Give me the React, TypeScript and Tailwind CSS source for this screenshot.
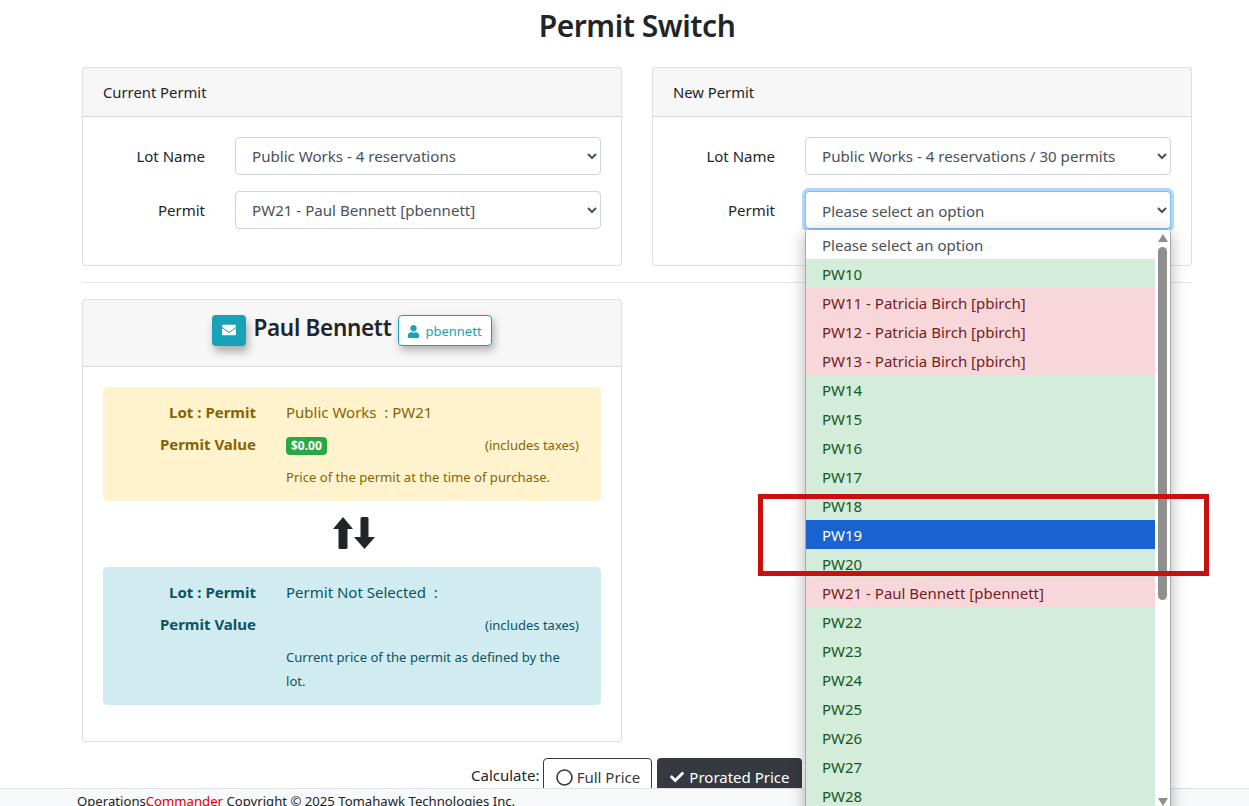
import React from "react";
import { FaEnvelope, FaUser, FaCheck, FaRegCircle } from "react-icons/fa";

const font = { fontFamily: '"Noto Sans", "Open Sans", sans-serif' };

function Row({ label, value, focus }: { label: string; value: string; focus?: boolean }) {
  return (
    <div className="flex items-center h-[38px] mb-4">
      <label className="w-[102px] text-right text-[15px] text-[#212529]">{label}</label>
      <select
        defaultValue={value}
        className={
          "ml-[30px] w-[366px] h-[38px] rounded-[4px] bg-white border px-3 text-[15.1px] text-[#495057] outline-none " +
          (focus ? "border-[#80bdff] pt-[1px] shadow-[0_0_0_3px_rgba(0,123,255,0.32)]" : "border-[#ced4da]")
        }
      >
        <option>{value}</option>
      </select>
    </div>
  );
}

function PermitCard({ title, lot, permit, focus }: { title: string; lot: string; permit: string; focus?: boolean }) {
  return (
    <section className="h-[199px] rounded-[4px] border border-[rgba(0,0,0,0.125)] bg-white">
      <div className="h-[49px] flex items-center px-5 bg-[rgba(0,0,0,0.03)] border-b border-[rgba(0,0,0,0.125)] text-[14.8px] text-[#212529]">
        {title}
      </div>
      <div className="pt-5 px-5">
        <Row label="Lot Name" value={lot} />
        <Row label="Permit" value={permit} focus={focus} />
      </div>
    </section>
  );
}

function Info({
  tone,
  value,
  badge,
  note,
  h,
}: {
  tone: string;
  value: string;
  badge?: boolean;
  note: string;
  h: string;
}) {
  return (
    <div className={"rounded-[4px] border pl-5 pr-[21px] pt-[8px] " + tone + " " + h}>
      <div className="grid grid-cols-[132px_1fr] gap-x-[30px] text-[15px]">
        <div className="h-[32px] flex items-center justify-end font-bold">Lot : Permit</div>
        <div className="h-[32px] flex items-center whitespace-pre">{value}</div>
        <div className="h-[32px] flex items-center justify-end font-bold">Permit Value</div>
        <div className="h-[32px] pt-[3px] flex items-center justify-between text-[13px]">
          {badge ? (
            <span className="bg-[#28a745] text-white font-bold text-[12px] rounded-[4px] px-[5px] h-[18px] leading-[18px]">$0.00</span>
          ) : (
            <span />
          )}
          <span>(includes taxes)</span>
        </div>
        <div />
        <div className="text-[13.1px] leading-[24px] pt-[5px]">{note}</div>
      </div>
    </div>
  );
}

const options: [string, "w" | "g" | "r" | "s"][] = [
  ["Please select an option", "w"],
  ["PW10", "g"],
  ["PW11 - Patricia Birch [pbirch]", "r"],
  ["PW12 - Patricia Birch [pbirch]", "r"],
  ["PW13 - Patricia Birch [pbirch]", "r"],
  ["PW14", "g"],
  ["PW15", "g"],
  ["PW16", "g"],
  ["PW17", "g"],
  ["PW18", "g"],
  ["PW19", "s"],
  ["PW20", "g"],
  ["PW21 - Paul Bennett [pbennett]", "r"],
  ["PW22", "g"],
  ["PW23", "g"],
  ["PW24", "g"],
  ["PW25", "g"],
  ["PW26", "g"],
  ["PW27", "g"],
  ["PW28", "g"],
];

const toneClass = {
  w: "bg-white text-[#495057]",
  g: "bg-[#d4edda] text-[#155724]",
  r: "bg-[#f8d7da] text-[#721c24]",
  s: "bg-[#1a62d0] text-white",
};

export default function App() {
  return (
    <div className="relative w-[1249px] h-[806px] overflow-hidden bg-white text-[#212529]" style={font}>
      <div className="w-[1110px] ml-[82px]">
        <h1 className="h-[67px] pt-[3px] text-center text-[30px] leading-[45px] font-semibold tracking-[-0.45px]">Permit Switch</h1>
        <div className="grid grid-cols-2 gap-x-[30px]">
          <PermitCard title="Current Permit" lot="Public Works - 4 reservations" permit="PW21 - Paul Bennett [pbennett]" />
          <PermitCard title="New Permit" lot="Public Works - 4 reservations / 30 permits" permit="Please select an option" focus />
        </div>
        <hr className="mt-4 mb-4 border-t border-[rgba(0,0,0,0.1)]" />
        <section className="w-[540px] h-[443px] rounded-[4px] border border-[rgba(0,0,0,0.125)]">
          <div className="h-[67px] flex items-center justify-center bg-[rgba(0,0,0,0.03)] border-b border-[rgba(0,0,0,0.125)]">
            <span className="w-[34px] h-[31px] rounded-[4px] bg-[#17a2b8] flex items-center justify-center text-white shadow-[2px_6px_9px_rgba(0,0,0,0.3)] mb-[6px]">
              <FaEnvelope className="text-[14px]" />
            </span>
            <span className="ml-[7px] text-[22.5px] font-semibold leading-[30px] tracking-[-0.3px] mb-[11px]">Paul Bennett</span>
            <span className="ml-[6px] w-[94px] h-[31px] pt-[3px] rounded-[4px] border border-[#17a2b8] bg-white text-[#17a2b8] text-[13px] flex items-center justify-center gap-[5px] shadow-[2px_4px_9px_rgba(0,0,0,0.3)] mb-[6px]">
              <FaUser className="text-[13px]" />
              pbennett
            </span>
          </div>
          <div className="px-5 pt-5">
            <Info
              tone="bg-[#fff3cd] border-[#fff3cd] text-[#856404]"
              value={"Public Works  : PW21"}
              badge
              note="Price of the permit at the time of purchase."
              h="h-[114px]"
            />
            <div className="h-[66px] pl-[3px] pb-[2px] flex items-center justify-center gap-[1px] text-[#212529]">
              <svg width="20" height="32" viewBox="0 0 20 32" fill="currentColor" aria-hidden="true">
                <path d="M10 0 L20 12 L14.5 12 L14.5 30.5 Q14.5 32 13 32 L7 32 Q5.5 32 5.5 30.5 L5.5 12 L0 12 Z" />
              </svg>
              <svg width="21" height="32" viewBox="0 0 21 32" fill="currentColor" aria-hidden="true">
                <path d="M10.5 32 L21 20 L14.5 20 L14.5 1.5 Q14.5 0 13 0 L8 0 Q6.5 0 6.5 1.5 L6.5 20 L0 20 Z" />
              </svg>
            </div>
            <Info
              tone="bg-[#d1ecf1] border-[#d1ecf1] text-[#0c5460]"
              value={"Permit Not Selected  :"}
              note="Current price of the permit as defined by the lot."
              h="h-[138px]"
            />
          </div>
        </section>
        <div className="mt-4 ml-[389px] flex items-start text-[15px]">
          <span className="mt-[6px] mr-[4px]">Calculate:</span>
          <button className="w-[109px] h-[38px] rounded-[4px] border border-[#343a40] text-[#343a40] flex items-center justify-center gap-[4px]">
            <FaRegCircle className="text-[17px]" />
            Full Price
          </button>
          <button className="ml-[5px] w-[145px] h-[38px] rounded-[4px] bg-[#343a40] text-white flex items-center justify-center gap-[5px]">
            <FaCheck className="text-[14px]" />
            Prorated Price
          </button>
        </div>
      </div>

      <footer className="absolute left-0 right-0 top-[788px] h-[40px] bg-[#f8f9fa] border-t border-[#dee2e6] pl-[77px] text-[13.15px] leading-[24px] text-[#212529]">
        Operations<span className="text-[#dc0000]">Commander</span> Copyright © 2025 Tomahawk Technologies Inc.
      </footer>

      <div className="absolute left-[805px] top-[229px] w-[366px] h-[640px] flex bg-white border border-[#a9a9a9] rounded-[4px] shadow-[0_4px_16px_rgba(0,0,0,0.3)]">
        <ul className="w-[349px]">
          {options.map(([t, k]) => (
            <li key={t} className={"h-[29px] leading-[31px] pl-[16px] text-[15px] " + toneClass[k]}>
              {t}
            </li>
          ))}
        </ul>
        <div className="relative w-[15px] bg-white">
          <svg className="absolute left-[3px] top-[4px]" width="10" height="8" viewBox="0 0 10 8"><path d="M5 0 L10 8 L0 8 Z" fill="#8f8f8f" /></svg>
          <div className="absolute left-[3px] top-[17px] w-[9px] h-[353px] rounded-[5px] bg-[#8f8f8f]" />
          <svg className="absolute left-[3px] top-[568px]" width="10" height="8" viewBox="0 0 10 8"><path d="M0 0 L10 0 L5 8 Z" fill="#8f8f8f" /></svg>
        </div>
      </div>

      <div className="absolute left-[758px] top-[494px] w-[451px] h-[82px] border-[5px] border-[#c8100f]" />
    </div>
  );
}
